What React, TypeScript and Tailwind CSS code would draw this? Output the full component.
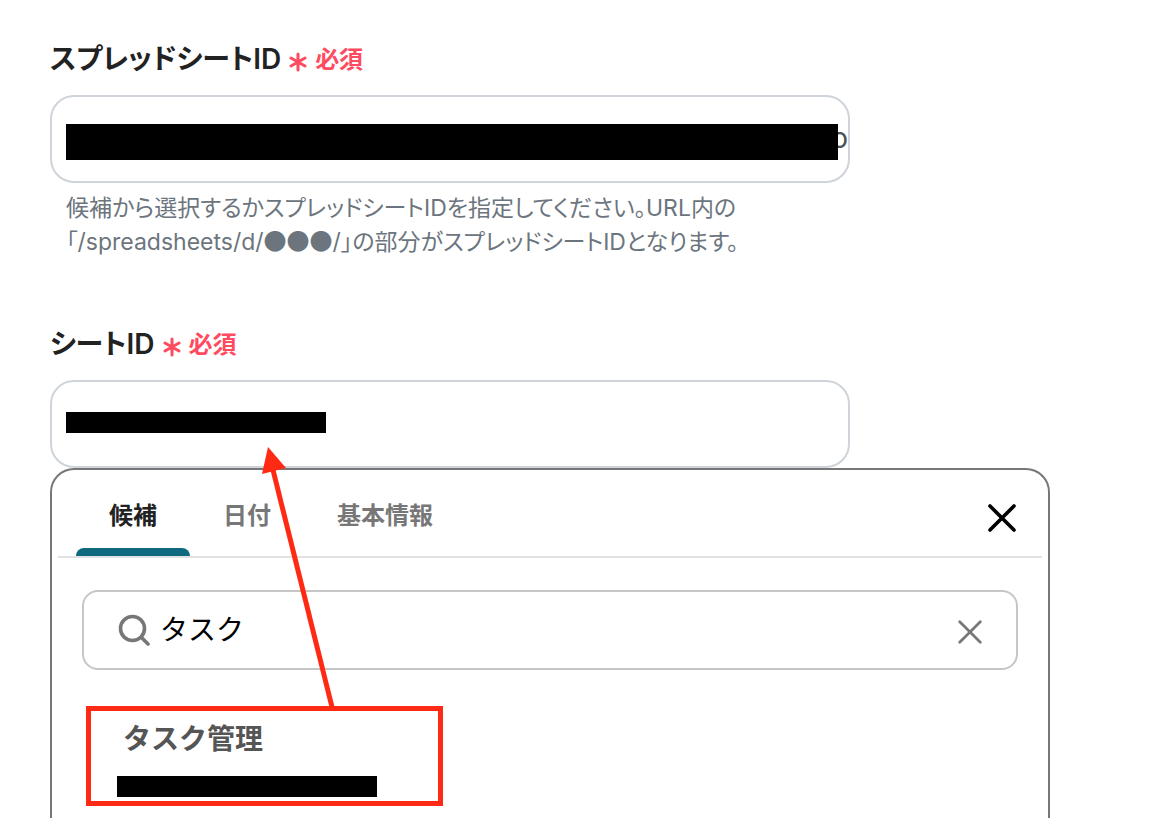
import { useState } from "react";

const tabs = ["候補", "日付", "基本情報"];

function FieldLabel({ htmlFor, text }: { htmlFor: string; text: string }) {
  return (
    <label htmlFor={htmlFor} className="flex items-center h-12 mb-3 text-[28px] font-semibold text-[#222]">
      <span className="[font-feature-settings:'palt']">{text}</span>
      <span className="flex items-center gap-2 ml-2 pt-0.5 text-2xl text-[#ff4b5f]">
        <svg viewBox="0 0 18 20" className="w-4.5 h-5 mt-1" fill="none" stroke="currentColor" strokeWidth="3" strokeLinecap="round">
          <path d="M9 2v16M2 6l14 8M16 6L2 14" />
        </svg>
        必須
      </span>
    </label>
  );
}

function CloseIcon({ className, strokeWidth }: { className: string; strokeWidth: number }) {
  return (
    <svg viewBox="0 0 28 28" className={className} fill="none" stroke="currentColor" strokeWidth={strokeWidth} strokeLinecap="round">
      <path d="M2 2l24 24M26 2L2 26" />
    </svg>
  );
}

function Suggestions() {
  const [active, setActive] = useState("候補");
  const [query, setQuery] = useState("タスク");

  return (
    <div className="relative flex-1 max-w-[1000px] border-2 border-b-0 border-[#777] rounded-t-3xl">
      <div className="flex justify-between mx-1.5 h-22 pl-4.5 pr-6.5 border-b-2 border-[#e2e2e2]">
        <div role="tablist" className="flex">
          {tabs.map((tab) => (
            <button
              key={tab}
              role="tab"
              aria-selected={active === tab}
              onClick={() => setActive(tab)}
              className={
                active === tab
                  ? "relative px-[33px] pt-1.5 text-2xl font-semibold text-[#222] cursor-pointer"
                  : "relative px-[33px] pt-1.5 text-2xl font-semibold text-[#777] cursor-pointer"
              }
            >
              {tab}
              {active === tab && <span className="absolute left-0 bottom-0 w-full h-2 rounded-t-lg bg-[#0f6a80]" />}
            </button>
          ))}
        </div>
        <button aria-label="閉じる" className="pt-2.5 text-black cursor-pointer">
          <CloseIcon className="w-7 h-7" strokeWidth={3.6} />
        </button>
      </div>

      <div className="flex items-center mx-7.5 mt-8 h-20 pl-8.5 pr-8.5 border-2 border-[#c6c6c6] rounded-2xl">
        <svg viewBox="0 0 32 32" className="w-8 h-8 shrink-0 text-[#777]" fill="none" stroke="currentColor" strokeLinecap="round">
          <circle cx="14.5" cy="14.5" r="12" strokeWidth="3.6" />
          <path d="M23.5 23.5l6.5 6.5" strokeWidth="3.6" />
        </svg>
        <input
          aria-label="検索"
          value={query}
          onChange={(e) => setQuery(e.target.value)}
          className="flex-1 min-w-0 ml-2.5 text-[28px] text-black outline-none"
        />
        <button aria-label="クリア" onClick={() => setQuery("")} className="pt-1 text-[#777] cursor-pointer">
          <CloseIcon className="w-6 h-6" strokeWidth={3.2} />
        </button>
      </div>

      <button className="block mt-11 ml-[65px] text-left cursor-pointer">
        <span className="block pl-1.5 text-[28px] leading-12.5 font-semibold text-[#555]">タスク管理</span>
        <span className="block w-65 h-[21px] mt-3 bg-black" />
      </button>

      {/* arrow from the chosen sheet to the field */}
      <svg viewBox="0 0 400 370" className="absolute left-0 -top-7.5 w-100 h-[370px] pointer-events-none" fill="none" stroke="#ff2a13" strokeWidth="5">
        <path d="M36.5 268.5h352v95h-352z" />
        <path d="M280 267L221 30" />
        <path d="M216 7L210 34L234 28z" fill="#ff2a13" stroke="none" />
      </svg>
    </div>
  );
}

export default function App() {
  const [spreadsheetId, setSpreadsheetId] = useState("o");
  const [sheetId, setSheetId] = useState("");

  return (
    <main className="flex flex-col min-h-screen px-12.5 pt-[35px] bg-white font-[Inter,'Noto_Sans_CJK_JP',sans-serif]">
      <FieldLabel htmlFor="spreadsheet-id" text="スプレッドシートID" />
      <div className="relative max-w-200">
        <input
          id="spreadsheet-id"
          value={spreadsheetId}
          onChange={(e) => setSpreadsheetId(e.target.value)}
          className="block w-full h-22 pl-4 pb-0.5 border-2 border-[#ced4da] rounded-3xl text-right text-[28px] text-[#495057] outline-none"
        />
        <span className="absolute left-4 right-3 top-[29px] h-9 bg-black" />
      </div>
      <p className="max-w-200 mt-2 px-4 text-[23px] leading-8.5 text-[#6c757d] [font-feature-settings:'palt']">
        候補から選択するかスプレッドシートIDを指定してください。URL内の
        <br />
        「/spreadsheets/d/<span className="leading-none font-['Noto_Sans_CJK_JP',sans-serif]">●●●</span>/」の部分がスプレッドシートIDとなります。
      </p>

      <div className="mt-[61px]">
        <FieldLabel htmlFor="sheet-id" text="シートID" />
      </div>
      <div className="relative max-w-200">
        <input
          id="sheet-id"
          value={sheetId}
          onChange={(e) => setSheetId(e.target.value)}
          className="block w-full h-22 px-4 border-2 border-[#ced4da] rounded-3xl text-[28px] text-[#495057] outline-none"
        />
        <span className="absolute left-4 top-8 w-65 h-[21px] bg-black" />
      </div>
      <Suggestions />
    </main>
  );
}
